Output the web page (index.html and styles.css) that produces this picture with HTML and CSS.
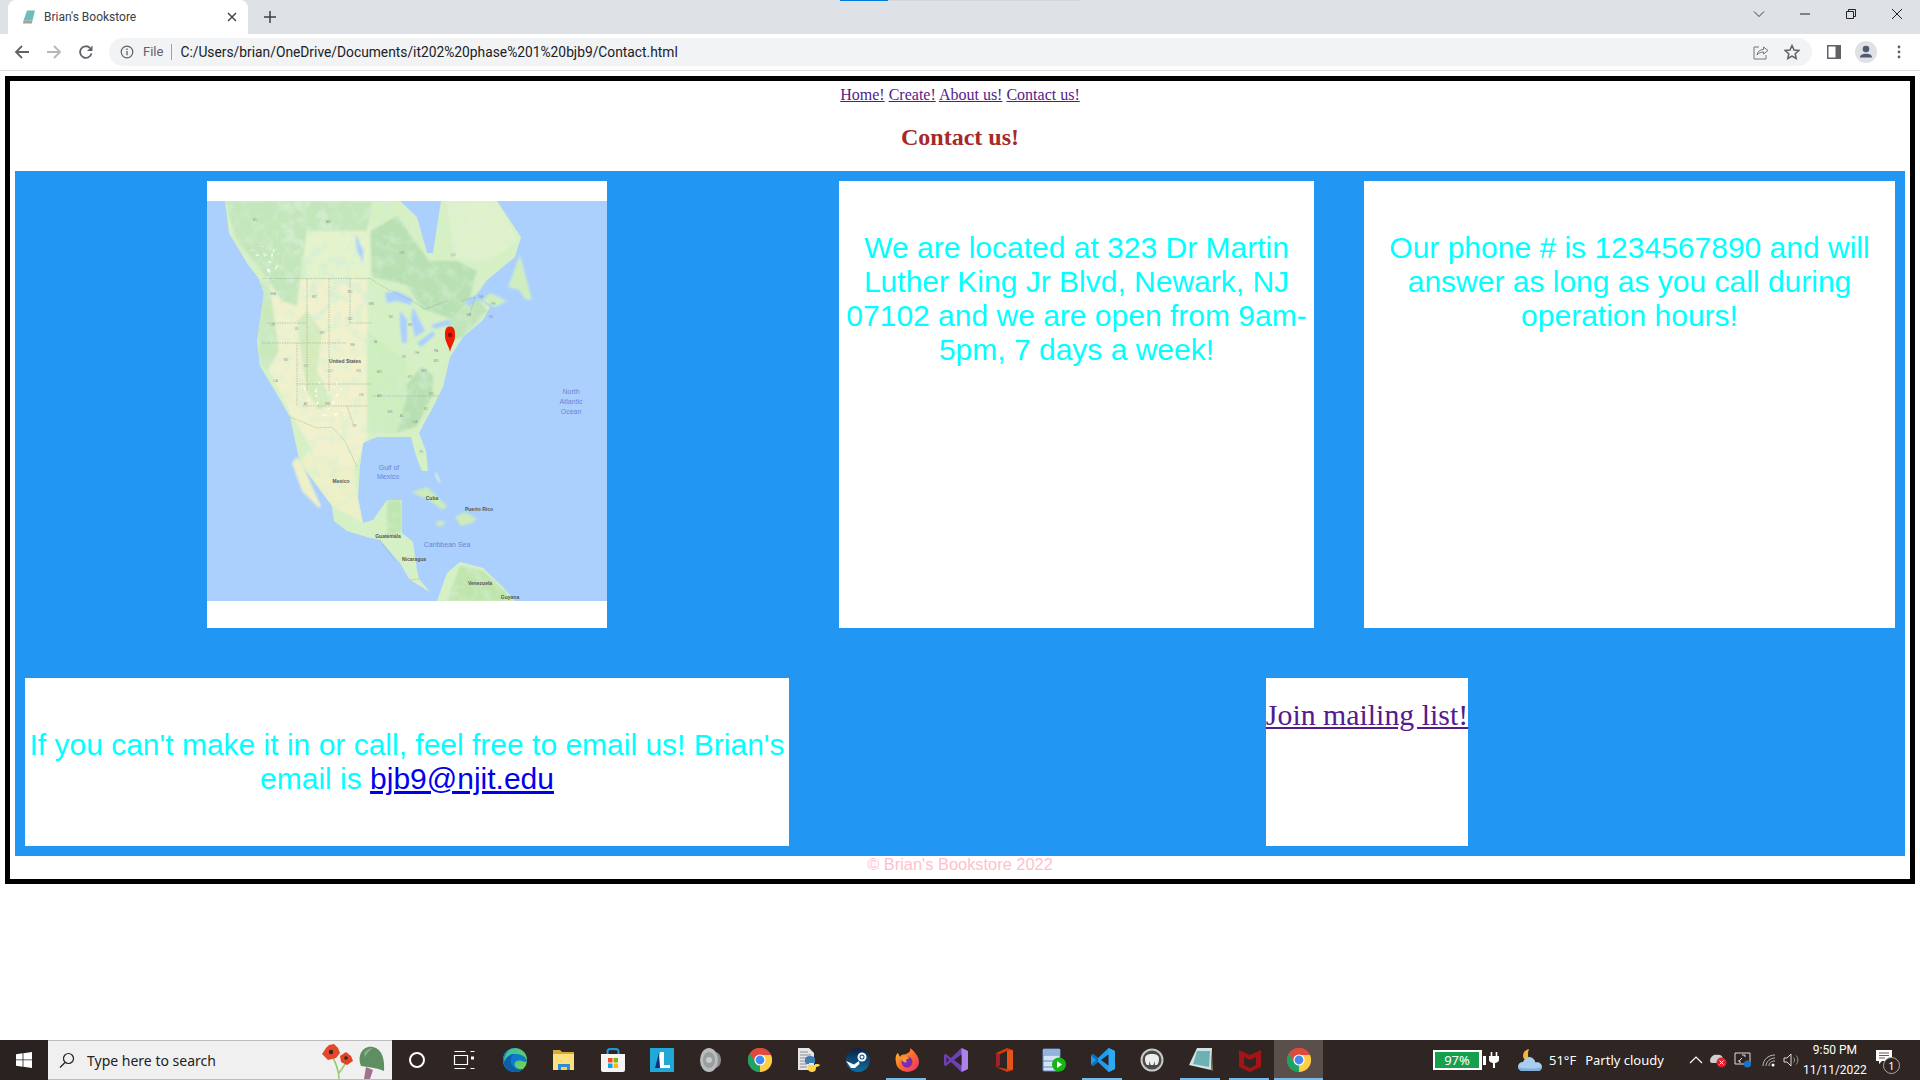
FILE: index.html
```html
<!DOCTYPE html>
<html lang="en">
<head>
<meta charset="utf-8">
<title>Brian's Bookstore</title>
<link rel="stylesheet" href="styles.css">
</head>
<body>
<svg class="defs" width="0" height="0" aria-hidden="true">
  <symbol id="chrome" viewBox="0 0 24 24">
    <circle cx="12" cy="12" r="12" fill="#dd4b3e"/>
    <path d="M1.600 18 7 9l5 3 0 12A12 12 0 0 1 1.600 18Z" fill="#1ea362"/>
    <path d="M2 5.200 7 14 1.600 18A12 12 0 0 1 2 5.200Z" fill="#1ea362"/>
    <path d="M12 24 12 12l-1-5H23A12 12 0 0 1 12 24Z" fill="#ffce43"/>
    <path d="M12 7H23A12 12 0 0 0 2 5.200L7 14A5.500 5.500 0 0 1 12 7Z" fill="#dd4b3e"/>
    <circle cx="12" cy="12" r="5.600" fill="#fff"/>
    <circle cx="12" cy="12" r="4.400" fill="#4688f1"/>
  </symbol>
</svg>
<div class="progress"><span class="progress-done"></span><span class="progress-rest"></span></div>
<header class="tabstrip">
  <div class="tab">
    <svg class="favicon" viewBox="0 0 16 16"><path d="M6 1.500h8L11.500 11.500H2.500Z" fill="#6fbcbc"/><path d="M2.500 11.500h9l-.6 3H2Z" fill="#9aa5a5"/></svg>
    <span class="tab-title">Brian's Bookstore</span>
    <svg class="tab-close" viewBox="0 0 10 10"><path d="M1 1l8 8M9 1l-8 8" stroke="#3c4043" stroke-width="1.400"/></svg>
  </div>
  <svg class="newtab" viewBox="0 0 12 12"><path d="M6 0v12M0 6h12" stroke="#3c4043" stroke-width="1.500"/></svg>
  <div class="winctl">
    <svg class="wc wc-chev" viewBox="0 0 12 8"><path d="M1 1.500l5 5 5-5" fill="none" stroke="#3c4043"/></svg>
    <svg class="wc wc-min" viewBox="0 0 12 12"><path d="M1 6h10" stroke="#222"/></svg>
    <svg class="wc wc-max" viewBox="0 0 12 12"><path d="M1.500 3.500h7v7h-7z M3.500 3.500v-2h7v7h-2" fill="none" stroke="#222"/></svg>
    <svg class="wc wc-close" viewBox="0 0 12 12"><path d="M1 1l10 10M11 1L1 11" stroke="#222"/></svg>
  </div>
</header>
<nav class="toolbar">
  <svg class="tb tb-back" viewBox="0 0 16 16"><path d="M15 8H2M8 2 2 8l6 6" fill="none" stroke="#5f6368" stroke-width="1.800"/></svg>
  <svg class="tb tb-fwd" viewBox="0 0 16 16"><path d="M1 8h13M8 2l6 6-6 6" fill="none" stroke="#b6b9bc" stroke-width="1.800"/></svg>
  <svg class="tb tb-reload" viewBox="0 0 16 16"><path d="M13.500 9.500A5.800 5.800 0 1 1 12 4" fill="none" stroke="#5f6368" stroke-width="1.800"/><path d="M14.500 1.500v5.500H9Z" fill="#5f6368"/></svg>
  <div class="omnibox">
    <svg class="info" viewBox="0 0 14 14"><circle cx="7" cy="7" r="5.800" fill="none" stroke="#5f6368" stroke-width="1.200"/><path d="M7 6v4.200M7 3.600v1.300" stroke="#5f6368" stroke-width="1.300"/></svg>
    <span class="scheme">File</span>
    <span class="omni-sep"></span>
    <span class="url">C:/Users/brian/OneDrive/Documents/it202%20phase%201%20bjb9/Contact.html</span>
    <svg class="omni-share" viewBox="0 0 16 16"><path d="M6 3H1v12h12v-4" fill="none" stroke="#72767a"/><path d="M4 11c.6-3.500 3-5.500 6.500-5.500V3L15 6.500 10.500 10V8C8 8 5.500 9 4 11Z" fill="none" stroke="#72767a"/></svg>
    <svg class="omni-star" viewBox="0 0 16 16"><path d="M8 1.500l2 4.500 4.800.5-3.600 3.200 1 4.800L8 12l-4.200 2.500 1-4.800L1.200 6.500 6 6Z" fill="none" stroke="#5f6368" stroke-width="1.500"/></svg>
  </div>
  <svg class="tb-panel" viewBox="0 0 14 14"><rect width="14" height="14" fill="#5f6368"/><rect x="1.500" y="1.500" width="7" height="11" fill="#fff"/></svg>
  <svg class="avatar" viewBox="0 0 22 22"><circle cx="11" cy="11" r="11" fill="#dfe1e5"/><circle cx="11" cy="8" r="3.300" fill="#4f5b73"/><path d="M5 16.500c0-2.800 3-3.800 6-3.800s6 1 6 3.800Z" fill="#4f5b73"/></svg>
  <svg class="kebab" viewBox="0 0 4 14"><circle cx="2" cy="2" r="1.400" fill="#5f6368"/><circle cx="2" cy="7" r="1.400" fill="#5f6368"/><circle cx="2" cy="12" r="1.400" fill="#5f6368"/></svg>
</nav>

<main class="viewport">
  <div class="frame">
    <div class="site-nav">
      <a href="#">Home!</a> <a href="#">Create!</a> <a href="#">About us!</a> <a href="#">Contact us!</a>
    </div>
    <h1 class="page-title">Contact us!</h1>
    <section class="grid">
      <div class="card card-map">
        <svg class="map" viewBox="0 0 400 400" role="img" aria-label="Map of North America with a pin on Newark">
          <defs>
            <filter id="soft" x="-5%" y="-5%" width="110%" height="110%"><feGaussianBlur stdDeviation="1.200"/></filter>
            <filter id="mottle" x="0" y="0" width="100%" height="100%">
              <feTurbulence type="fractalNoise" baseFrequency="0.09" numOctaves="3" seed="7"/>
              <feColorMatrix type="matrix" values="0 0 0 0 .66  0 0 0 0 .86  0 0 0 0 .66  1.600 0 0 0 -.72"/>
            </filter>
            <filter id="snow" x="0" y="0" width="100%" height="100%">
              <feTurbulence type="fractalNoise" baseFrequency="0.25" numOctaves="2" seed="3"/>
              <feColorMatrix type="matrix" values="0 0 0 0 1  0 0 0 0 1  0 0 0 0 1  5 0 0 0 -3.100"/>
            </filter>
            <clipPath id="landclip"><path d="M18 0 22 32 40 62 52 78 57 92 50 140 53 165 68 190 83 216 93 262 110 285 125 305 127 320 140 330 160 336 173 339 193 362 203 379 223 391 230 400 240 372 253 361 276 367 296 386 308 400 230 400 223 391 212 378 210 369 206 341 195 332 195 299 180 299 166 319 156 322 151 296 153 266 156 242 170 236 204 236 209 255 215 270 221 270 219 250 212 232 226 206 236 186 243 156 256 136 276 119 283 106 268 96 280 79 308 56 314 36 290 0 234 0 226 52 220 52 210 16 193 0Z"/></clipPath>
            <clipPath id="westclip"><path d="M70 0H100L160 40 170 100 150 130 120 130 90 100 60 60Z"/></clipPath>
            <clipPath id="swclip"><path d="M95 180H140V215H100Z M42 45H72V82H56Z"/></clipPath>
          </defs>
          <rect width="400" height="400" fill="#abd0fe"/>
          <g clip-path="url(#landclip)">
            <rect width="400" height="400" fill="#d6f0c4"/>
            <g filter="url(#soft)">
              <path d="M95 25 165 25 163 77 100 77Z" fill="#e5f3cc"/>
              <path d="M60 78H160L162 232 150 262 125 300 112 262 100 240 85 215 62 170Z" fill="#f1f1cd"/>
              <path d="M18 0H165L160 30 100 30 95 60 90 105 75 100 55 70 30 40Z" fill="#c4e6bb"/>
              <path d="M50 80 62 80 72 150 60 170 52 160Z" fill="#c9e9bd"/>
              <path d="M163 30 190 15 222 60 250 60 270 70 262 100 245 118 215 108 200 84 165 76Z" fill="#b8e0b3"/>
              <path d="M240 0 290 0 312 40 280 60 248 58Z" fill="#e0f2cc"/>
              <path d="M245 118 270 95 280 110 258 135 245 140 238 125Z" fill="#c0e4b8"/>
              <path d="M190 195 215 165 226 175 225 195 210 225 190 232 178 222Z" fill="#b8dfb2"/>
              <path d="M160 130 160 232 190 232 200 195 200 160Z" fill="#cdeebd"/>
              <path d="M95 262 100 250 125 260 148 270 150 296 156 322 125 305Z" fill="#eef0c8"/>
              <path d="M180 299 195 299 195 332 180 332Z" fill="#bfe6b0"/>
              <path d="M240 400 253 365 276 370 300 392 308 400Z" fill="#bfe5ac"/>
              <path d="M90 120 100 110 115 130 110 170 125 200 112 210 100 190 95 160Z" fill="#d6ebbc"/>
            </g>
            <rect width="400" height="400" filter="url(#mottle)"/>
            <g clip-path="url(#westclip)"><rect width="400" height="140" y="0" filter="url(#mottle)"/></g>
            <g clip-path="url(#swclip)"><rect width="400" height="400" filter="url(#snow)"/></g>
          </g>
          <g filter="url(#soft)" class="map-islands">
            <path d="M85 262 95 290 112 307 114 305 104 283 96 264 90 256Z" fill="#eef0c8"/>
            <path d="M301 86 313 54 325 99 318 98 312 89Z" fill="#cfeec0"/>
            <path d="M275 100 283 92 290 95 300 100 288 106Z" fill="#cfeec0"/>
            <path d="M205 291 220 286 240 305 236 309 220 298 210 294Z M248 316 258 311 270 318 265 322 254 325Z M229 320 238 320 236 325 230 325Z" fill="#cdebbb"/>
            <path d="M229 271 233 280 232 282 228 273Z" fill="#eef5dc"/>
          </g>
          <g class="map-water" filter="url(#soft)">
            <path d="M178 92 190 90 206 98 204 104 190 100 180 102Z"/>
            <path d="M193 110 200 118 200 142 195 142 193 125Z"/>
            <path d="M206 106 218 130 208 136 204 118Z"/>
            <path d="M210 142 226 130 228 134 214 146Z"/>
            <path d="M224 124 243 118 243 123 228 128Z"/>
            <path d="M148 32 156 50 156 62 150 48Z"/>
            <path d="M258 100 280 88 276 94 262 106Z"/>
          </g>
          <g class="map-borders" fill="none">
            <path d="M56 77.500H163L180 88 205 100 218 108 240 100"/>
            <path d="M55 142H140M60 122 100 122M100 78V190M122 78V190M90 142 90 205M90 183H165M96 205H160M140 205 147 225M143 122V78M143 122 165 122"/>
            <path d="M83 216 110 227 125 226 138 240 150 266 M165 195H232"/>
            <path d="M254 100 268 96 262 116"/>
            <path d="M180 333 192 333 M173 339 188 360 M203 379 212 378"/>
          </g>
          <g transform="translate(-7 -21) scale(.33333)" class="states">
            <text x="343" y="355">MT</text><text x="450" y="340">ND</text><text x="450" y="420">SD</text><text x="367" y="461">WY</text><text x="458" y="499">NE</text><text x="390" y="577">CO</text><text x="476" y="577">KS</text><text x="484" y="648">OK</text><text x="463" y="740">TX</text><text x="318" y="675">AZ</text><text x="383" y="675">NM</text><text x="318" y="562">UT</text><text x="258" y="544">NV</text><text x="226" y="607">CA</text><text x="218" y="438">OR</text><text x="290" y="450">ID</text><text x="219" y="345">WA</text><text x="514" y="375">MN</text><text x="526" y="488">IA</text><text x="538" y="580">MO</text><text x="538" y="650">AR</text><text x="570" y="700">MS</text><text x="605" y="712">AL</text><text x="645" y="728">GA</text><text x="665" y="820">FL</text><text x="630" y="595">KY</text><text x="650" y="522">OH</text><text x="612" y="535">IN</text><text x="572" y="413">WI</text><text x="630" y="438">MI</text><text x="708" y="516">PA</text><text x="708" y="547">MD</text><text x="672" y="577">WV</text><text x="695" y="645">NC</text><text x="678" y="690">SC</text>
            <text x="605" y="222">ON</text><text x="760" y="228">QC</text><text x="385" y="130">AB</text><text x="165" y="122">BC</text><text x="843" y="355">NB</text><text x="880" y="375">PE</text><text x="873" y="415">NS</text><text x="807" y="408">ME</text>
          </g>
          <text class="map-label map-dark" x="138" y="162">United States</text>
          <text class="map-label map-dark" x="134" y="282">Mexico</text>
          <text class="map-label map-sea" x="364" y="193">North</text>
          <text class="map-label map-sea" x="364" y="203">Atlantic</text>
          <text class="map-label map-sea" x="364" y="213">Ocean</text>
          <text class="map-label map-sea" x="182" y="269">Gulf of</text>
          <text class="map-label map-sea" x="181" y="278">Mexico</text>
          <text class="map-label map-sea" x="240" y="346">Caribbean Sea</text>
          <text class="map-label map-dark" x="225" y="299">Cuba</text>
          <text class="map-label map-dark" x="272" y="310">Puerto Rico</text>
          <text class="map-label map-dark" x="181" y="337">Guatemala</text>
          <text class="map-label map-dark" x="207" y="360">Nicaragua</text>
          <text class="map-label map-dark" x="273" y="384">Venezuela</text>
          <text class="map-label map-dark" x="303" y="398">Guyana</text>
          <path d="M243 125.500C237.500 125.500 238 132 238 135 238 141 242 145 243 151 244 145 248 141 248 135 248 132 248.500 125.500 243 125.500Z" fill="#f01a00"/>
          <circle cx="243" cy="134" r="2.300" fill="#8f1208"/>
        </svg>
      </div>
      <div class="card"><p class="card-text">We are located at 323 Dr Martin Luther King Jr Blvd, Newark, NJ 07102 and we are open from 9am-5pm, 7 days a week!</p></div>
      <div class="card"><p class="card-text">Our phone # is 1234567890 and will answer as long as you call during operation hours!</p></div>
      <div class="card card-email"><p class="card-text">If you can't make it in or call, feel free to email us! Brian's email is <a class="mail" href="#">bjb9@njit.edu</a></p></div>
      <div class="card card-join"><a class="join" href="#">Join mailing list!</a></div>
    </section>
    <footer class="site-foot">© Brian's Bookstore 2022</footer>
  </div>
</main>

<footer class="taskbar">
  <div class="start"><svg viewBox="0 0 16 16" class="winlogo"><path d="M0 2.200 6.600 1.300V7.500H0ZM7.400 1.200 16 0V7.500H7.400ZM0 8.300H6.600V14.700L0 13.800ZM7.400 8.300H16V16L7.400 14.800Z" fill="#fff"/></svg></div>
  <div class="search">
    <svg class="search-glass" viewBox="0 0 16 16"><circle cx="9.500" cy="6.500" r="5" fill="none" stroke="#222" stroke-width="1.200"/><path d="M6 10.500 1 15.500" stroke="#222" stroke-width="1.300"/></svg>
    <span class="search-text">Type here to search</span>
    <svg class="search-art" viewBox="0 0 66 38">
      <path d="M19 38C19 30 17 24 12 15M19 32C22 28 25 24 27 19" fill="none" stroke="#9cc76f" stroke-width="1.600"/>
      <path d="M2 13 6 7 9 4 14 3 18 7 20 12 16 17 8 19Z" fill="#e2492a"/><path d="M20 15 26 11 31 15 33 20 27 24 21 21Z" fill="#dd4526"/>
      <circle cx="11" cy="11" r="2.200" fill="#3a2320"/><circle cx="26" cy="17" r="1.800" fill="#3a2320"/>
      <path d="M41 25C36 11 46 4 53 6 62 8 65 18 64 30 57 27 48 26 41 25Z" fill="#5e8f62"/>
      <path d="M44 12C47 8 50 7 53 7 50 9 47 12 45 16Z" fill="#86b083"/>
      <path d="M46 26 53 29 50 38H44Z" fill="#a5708e"/>
    </svg>
  </div>
  <div class="taskicons">
    <div class="ti"><svg class="ico" viewBox="0 0 24 24"><circle cx="12" cy="12" r="7" fill="none" stroke="#fff" stroke-width="2"/></svg></div>
    <div class="ti ti-task"><svg class="ico" viewBox="0 0 24 24"><path d="M1.500 3.500h11M1.500 20.500h11M1.500 7.500h13v9h-13z M17.500 3.500h4M17.500 20.500h4" fill="none" stroke="#fff" stroke-width="1.200"/><rect x="18" y="8.500" width="3" height="3" fill="#fff"/></svg></div>
    <div class="ti"><svg class="ico" viewBox="0 0 24 24"><defs><linearGradient id="edge1" x1="0" y1="0" x2="1" y2="1"><stop offset="0" stop-color="#2cc0b0"/><stop offset="1" stop-color="#7ad44e"/></linearGradient></defs><circle cx="12" cy="12" r="12" fill="url(#edge1)"/><path d="M12 0C5 0 0 5 0 12 0 19 5 24 12 24 15 24 18 23 20.500 21 16 22 12 20 11.500 16.500 11 14 14 12 17 12.500 20 13 22.500 15 24 13 23 8.500 18 6 12 6 7 6 3 9 1 14 1 6 6 0 12 0Z" fill="#1079c9"/><path d="M1 14C3 9 7 6 12 6 8 7 7 11 8 15 9.500 20 15 22.500 20.500 21 15 26 1 25 1 14Z" fill="#0c5ea8"/></svg></div>
    <div class="ti"><svg class="ico" viewBox="0 0 24 24"><path d="M1 2h7l2 2H22v18H1Z" fill="#d9a83b"/><rect x="1" y="6" width="21" height="16" fill="#ffdf7e"/><rect x="6" y="16" width="12" height="6" fill="#2c8dd9"/><rect x="9" y="19" width="6" height="3" fill="#f6cf6a"/></svg></div>
    <div class="ti"><svg class="ico" viewBox="0 0 24 24"><path d="M6.500 6V3.500C6.500 1 8 1 12 1s5.500 0 5.500 2.500V6" fill="none" stroke="#1b9fe0" stroke-width="2"/><path d="M0 6H24V22a2 2 0 0 1-2 2H2a2 2 0 0 1-2-2Z" fill="#f4f4f4"/><rect x="7" y="10" width="4.500" height="4.500" fill="#f25022"/><rect x="12.500" y="10" width="4.500" height="4.500" fill="#7fba00"/><rect x="7" y="15.500" width="4.500" height="4.500" fill="#00a4ef"/><rect x="12.500" y="15.500" width="4.500" height="4.500" fill="#ffb900"/></svg></div>
    <div class="ti"><svg class="ico" viewBox="0 0 24 24"><rect width="24" height="24" fill="#1fa8d8"/><path d="M10 4h4v13h6v3H6Z" fill="#fff"/><path d="M9 5 5 20h5Z" fill="#0f2f7a"/></svg></div>
    <div class="ti"><svg class="ico" viewBox="0 0 24 24"><ellipse cx="16" cy="12" rx="6" ry="8" fill="#8b8d90"/><ellipse cx="10" cy="12" rx="9" ry="12" fill="#b9bcbf"/><ellipse cx="10" cy="12" rx="6" ry="8" fill="#9b9ea1"/><circle cx="10" cy="12" r="3" fill="#c9cbcd"/></svg></div>
    <div class="ti"><svg class="ico"><use href="#chrome"/></svg></div>
    <div class="ti"><svg class="ico" viewBox="0 0 24 24"><path d="M1 0H12L17 5V22H1Z" fill="#e4e6e8"/><path d="M3 4h8M3 7h11M3 10h8M3 13h7M3 16h7M3 19h7" stroke="#8a8d90"/><path d="M8 12c0-3 2-4 5-4s5 1 5 3v4h-6v1h-2c-2 0-2-2-2-4Z" fill="#3f7cb2"/><path d="M23 15c0 3-2 4-4 4v1c0 3-2 4-4 4s-4-1-4-3v-4h7v-1h3c1 0 2 1 2 3Z" fill="#ffd64f"/></svg></div>
    <div class="ti"><svg class="ico" viewBox="0 0 24 24"><defs><linearGradient id="st" x1="0" y1="0" x2="0" y2="1"><stop offset="0" stop-color="#0d2147"/><stop offset="1" stop-color="#0f6f9f"/></linearGradient></defs><circle cx="12" cy="12" r="12" fill="url(#st)"/><path d="M0 13l8 3.500 5-3.500 .5 3-4.500 4L5 20Z" fill="#fff"/><circle cx="16" cy="9" r="4.500" fill="#fff"/><circle cx="16" cy="9" r="2.500" fill="#1a4a7c"/><circle cx="16" cy="9" r="1.500" fill="#fff"/></svg></div>
    <div class="ti ti-on"><svg class="ico" viewBox="0 0 24 24"><defs><linearGradient id="fx" x1="0" y1="0" x2="1" y2="1"><stop offset="0" stop-color="#ffc42c"/><stop offset=".5" stop-color="#ff6a2b"/><stop offset="1" stop-color="#ee2a7a"/></linearGradient></defs><path d="M15 0C19 3 24 8 24 14A11.500 10 0 0 1 1 14C0 10 1 6 3 5L5 9C6 6 9 7 11 6 14 5 16 3 15 0Z" fill="url(#fx)"/><circle cx="12" cy="14" r="5.500" fill="#7a2bb8"/><path d="M7 11C9 7 14 8 14 11 12 10 10 12 12 14 10 15 7 14 7 11Z" fill="#ff9c2e"/></svg></div>
    <div class="ti"><svg class="ico" viewBox="0 0 24 24"><path d="M17.500 0 24 3V21L17.500 24 7 14 2 18 0 17V7L2 6 7 10Z" fill="#6f3fb8"/><path d="M17.500 0 24 3V21L17.500 24Z" fill="#ac82e8"/><path d="M17.500 6.500V17.500L10 12Z M2.500 9V15L5 12Z" fill="#2d2320"/></svg></div>
    <div class="ti"><svg class="ico" viewBox="0 0 24 24"><path d="M3 5 14 0 20 2V22L14 24 3 19 14 21V3L7 6V17L3 19Z" fill="#d73b02"/><path d="M3 5 7 6V17L3 19Z" fill="#a51e2b"/><path d="M14 3 20 2V22L14 21Z" fill="#e8531c"/></svg></div>
    <div class="ti"><svg class="ico" viewBox="0 0 24 24"><rect x="1" y="1" width="17" height="22" rx="1" fill="#d5e2f1" stroke="#5f8cc4"/><path d="M1 7h17M1 13h17M1 19h17M9 1v6" stroke="#5f8cc4" fill="none"/><rect x="1" y="1" width="17" height="6" fill="#93b3dc"/><circle cx="17" cy="16.500" r="7" fill="#12b712"/><path d="M15 13v7l5-3.500Z" fill="#fff"/></svg></div>
    <div class="ti ti-on"><svg class="ico" viewBox="0 0 24 24"><path d="M17.500 0 24 3V21L17.500 24 7 14 2 18 0 16.500V7.500L2 6 7 10Z" fill="#1f9cf0"/><path d="M17.500 0 24 3V21L17.500 24Z" fill="#2cabf2"/><path d="M7 10 2 6 0 7.500 5 12 0 16.500 2 18 7 14Z" fill="#0b6fb8"/><path d="M17.500 6.500V17.500L10 12Z" fill="#2d2320"/></svg></div>
    <div class="ti"><svg class="ico" viewBox="0 0 24 24"><circle cx="12" cy="12" r="10.500" fill="#4a4a4a" stroke="#c8c8c8" stroke-width="2"/><path d="M5 11c0-4 3-5 7-5s7 1 7 5c0 3-1 5-2 6h-2l-.5-4-1 4h-3l-1-4-.5 4H7c-1-1-2-3-2-6Z" fill="#eee"/></svg></div>
    <div class="ti ti-on"><svg class="ico" viewBox="0 0 24 24"><path d="M8 0H23L22 22 0 17Z" fill="#cfe3e6"/><path d="M8 3 21 3 20 19 4 16Z" fill="#6fb0b4"/><path d="M23 6 24 23 22 22Z" fill="#8a7a56"/></svg></div>
    <div class="ti ti-on"><svg class="ico" viewBox="0 0 24 24"><path d="M1 2 12 7 23 2V19L12 24 1 19ZM6 9V17L12 20 18 17V9L12 12Z" fill="#a51414"/></svg></div>
    <div class="ti ti-on ti-active"><svg class="ico"><use href="#chrome"/></svg></div>
  </div>
  <div class="tray">
    <div class="battery"><span class="battery-fill">97%</span></div>
    <span class="battery-nub"></span>
    <svg class="plug" viewBox="0 0 10 16"><path d="M2.500 0v4M7.500 0v4" stroke="#fff" stroke-width="1.600"/><path d="M0 4h10v4C10 10 7 11 6 11v5H4v-5C3 11 0 10 0 8Z" fill="#fff"/></svg>
    <svg class="weather" viewBox="0 0 24 24"><path d="M11 1C6.500 2 4 6 5.500 10 7 13 10 14 13 13 10 11 9 6 11 1Z" fill="#f3b53b"/><path d="M5 23c-3 0-5-2-5-4.500S2 14 5 14c1-3 4-5 7-5 3 .5 5 3 5.500 5.500 3-1 6.500 1 6.500 4.500 0 2-2 4-4 4Z" fill="#a9cdec"/><path d="M5 23c-3 0-5-2-5-4 4 2 18 2 24 0 0 2-2 4-4 4Z" fill="#7fb0dc"/></svg>
    <span class="temp">51°F</span>
    <span class="cond">Partly cloudy</span>
    <svg class="t-chev" viewBox="0 0 14 8"><path d="M1 7l6-6 6 6" fill="none" stroke="#fff" stroke-width="1.200"/></svg>
    <svg class="t-cloud" viewBox="0 0 18 16"><path d="M1 9c0-4 4-7 7-6 3-1 6 1 6 4v4H3C2 11 1 10 1 9Z" fill="#cfcfcf"/><circle cx="12.500" cy="10.500" r="5" fill="#e0202c"/><path d="M10.500 8.500l4 4M14.500 8.500l-4 4" stroke="#fff"/></svg>
    <svg class="t-screen" viewBox="0 0 18 16"><path d="M1 1h15v11H1z" fill="none" stroke="#ddd"/><path d="M5 9l3-3M8 3h3v2M7 10H5V8" fill="none" stroke="#ddd"/><circle cx="13.500" cy="12" r="3.600" fill="#1d72c9"/></svg>
    <svg class="t-wifi" viewBox="0 0 14 14"><path d="M1 13C1 7 6 2 13 2M4 13c0-4 4-8 9-8M7 13c0-3 2-5 6-5" fill="none" stroke="#bbb"/><circle cx="11" cy="12" r="1.500" fill="#fff"/></svg>
    <svg class="t-vol" viewBox="0 0 16 14"><path d="M1 5h3l4-4v12L4 9H1Z" fill="none" stroke="#ddd"/><path d="M10.500 4.500c1.500 1.500 1.500 3.500 0 5M13 2.500c2.500 2.500 2.500 6.500 0 9" fill="none" stroke="#999"/></svg>
    <div class="clock"><span>9:50 PM</span><span>11/11/2022</span></div>
    <div class="notif">
      <svg class="notif-ico" viewBox="0 0 16 15"><path d="M0 0h16v11H6L3 14v-3H0Z" fill="#fff"/><path d="M3 3h10M3 5.500h10M3 8h6" stroke="#333" stroke-width=".8"/></svg>
      <span class="notif-badge">1</span>
    </div>
  </div>
</footer>
</body>
</html>
```
FILE: styles.css
```css
* { box-sizing: border-box; }
html, body { margin: 0; height: 100%; }
body { display: flex; flex-direction: column; height: 1080px; width: 1920px; overflow: hidden; background: #fff; font-family: "Liberation Serif", serif; position: relative; }
.defs { position: absolute; }

.progress { position: absolute; left: 840px; top: 0; display: flex; height: 1px; z-index: 2; }
.progress-done { width: 48px; background: #0078d7; }
.progress-rest { width: 193px; background: #d3d5d8; }

.tabstrip { height: 34px; flex: none; background: #dee1e6; display: flex; align-items: flex-end; padding-left: 8px; }
.tab { width: 240px; height: 34px; background: #fff; border-radius: 8px 8px 0 0; display: flex; align-items: center; padding: 0 11px 0 13px; font: 12px Roboto, sans-serif; color: #3c4043; }
.favicon { width: 16px; height: 16px; flex: none; }
.tab-title { margin-left: 7px; flex: 1; white-space: nowrap; }
.tab-close { width: 10px; height: 10px; flex: none; }
.newtab { width: 12px; height: 12px; margin: 0 0 11px 16px; flex: none; }
.winctl { margin-left: auto; height: 34px; display: flex; align-items: center; padding-right: 17px; padding-bottom: 6px; }
.wc { flex: none; display: block; }
.wc-chev { width: 12px; height: 8px; margin-right: 34px; }
.wc-min { width: 12px; height: 12px; margin-right: 34px; }
.wc-max { width: 12px; height: 12px; margin-right: 34px; }
.wc-close { width: 12px; height: 12px; }

.toolbar { height: 37px; flex: none; background: #fff; border-bottom: 1px solid #dadce0; display: flex; align-items: center; padding: 0 0 1px 14px; }
.tb { width: 16px; height: 16px; flex: none; }
.tb-fwd { margin-left: 16px; }
.tb-reload { margin-left: 16px; }
.omnibox { margin-left: 15px; width: 1703px; height: 28px; border-radius: 14px; background: #f1f3f4; display: flex; align-items: center; padding: 0 12px 0 11px; font: 13.8px Roboto, sans-serif; }
.info { width: 14px; height: 14px; flex: none; }
.scheme { margin-left: 9px; color: #5f6368; font-size: 13px; }
.omni-sep { width: 1px; height: 16px; background: #9aa0a6; margin: 0 8px 0 8px; }
.url { color: #202124; flex: 1; white-space: nowrap; }
.omni-share { width: 16px; height: 16px; flex: none; margin-right: 15px; }
.omni-star { width: 16px; height: 16px; flex: none; }
.tb-panel { width: 14px; height: 14px; margin-left: 15px; flex: none; }
.avatar { width: 22px; height: 22px; margin-left: 14px; flex: none; }
.kebab { width: 4px; height: 14px; margin-left: 20px; flex: none; }

.viewport { flex: 1; padding: 5px 5px 0; min-height: 0; }
.frame { border: 5px solid #000; padding: 5px 5px 0; height: 808px; }
.site-nav { text-align: center; font-size: 16px; line-height: 18px; }
.site-nav a { color: #551a8b; }
.page-title { margin: 20px 0; font-size: 24px; line-height: 27px; text-align: center; color: #a52a2a; font-weight: bold; }
.grid { background: #2196f3; padding: 10px; display: grid; grid-template-columns: 764px 475px 1fr; grid-template-rows: 447px 168px; gap: 50px; }
.card { background: #fff; padding: 20px 0; text-align: center; }
.card-map { justify-self: center; width: 400px; }
.map { width: 400px; height: 400px; display: block; }
.card-text { margin: 30px 0; font: 30px/34px "Liberation Sans", sans-serif; color: #0ff; }
.card-email { padding-left: 3px; padding-right: 3px; }
.mail { color: #00e; }
.card-join { grid-column: 2 / 4; justify-self: center; }
.join { font: 29.85px/34px "Liberation Serif", serif; color: #551a8b; }
.site-foot { text-align: center; font: 16.4px/16px "Liberation Sans", sans-serif; color: #ffc0cb; }

.map-water path { fill: #abd0fe; }
.map-borders path { stroke: #8f9c88; stroke-width: .5; stroke-dasharray: 1.500 1; }
.states text { font: 10px "Liberation Sans", sans-serif; fill: #8b9a8b; text-anchor: middle; }
.map-label { font: bold 5px "Liberation Sans", sans-serif; text-anchor: middle; }
.map-dark { fill: #555; }
.map-sea { fill: #6c84d6; font-weight: normal; font-size: 7px; }

.taskbar { height: 40px; flex: none; background: #2f2522; display: flex; color: #fff; font: 12px "Noto Sans", sans-serif; }
.start { width: 48px; flex: none; background: #2a2220; display: flex; align-items: center; justify-content: center; }
.winlogo { width: 16px; height: 16px; }
.search { width: 344px; flex: none; background: #f0f0f0; border: 1px solid #bdbdbd; border-width: 1px 0; display: flex; align-items: center; padding-left: 11px; color: #222; }
.search-glass { width: 16px; height: 16px; flex: none; }
.search-text { margin-left: 12px; font-size: 14px; white-space: nowrap; }
.search-art { width: 66px; height: 38px; margin-left: auto; margin-right: 6px; }
.taskicons { display: flex; flex: none; }
.ti { width: 49px; height: 40px; display: flex; align-items: center; justify-content: center; position: relative; padding-bottom: 1px; }
.ti-task { padding-right: 2px; }
.ti-on::after { content: ""; position: absolute; left: 4px; right: 5px; bottom: 0; height: 2px; background: #76b9ed; }
.ti-active { background: #5a4f4a; }
.ti-active::after { left: 0; right: 0; }
.ico { width: 24px; height: 24px; display: block; }
.tray { flex: 1; display: flex; align-items: center; padding-left: 110px; font-size: 13px; }
.battery { width: 49px; height: 20px; border: 2px solid #fff; background: #fff; flex: none; }
.battery-fill { display: block; height: 16px; background: #16a04e; text-align: center; line-height: 16px; font-size: 13px; color: #fff; margin-right: 1px; }
.battery-nub { width: 3px; height: 9px; background: #fff; flex: none; margin-left: 1px; }
.plug { width: 10px; height: 16px; flex: none; margin-left: 3px; }
.weather { width: 24px; height: 24px; flex: none; margin-left: 19px; }
.temp { margin-left: 7px; white-space: nowrap; }
.cond { margin-left: 9px; white-space: nowrap; }
.t-chev { width: 14px; height: 8px; margin-left: 25px; flex: none; }
.t-cloud { width: 18px; height: 16px; margin-left: 6px; flex: none; }
.t-screen { width: 18px; height: 16px; margin-left: 7px; flex: none; }
.t-wifi { width: 14px; height: 14px; margin-left: 10px; flex: none; }
.t-vol { width: 16px; height: 14px; margin-left: 7px; flex: none; }
.clock { margin-left: 5px; width: 62px; display: flex; flex-direction: column; align-items: center; font: 12px/20px Roboto, sans-serif; white-space: nowrap; }
.notif { margin-left: 9px; width: 28px; height: 30px; position: relative; flex: none; }
.notif-ico { width: 16px; height: 15px; position: absolute; left: 1px; top: 5px; }
.notif-badge { position: absolute; left: 8px; top: 12px; width: 17px; height: 17px; border-radius: 50%; background: #2f2522; border: 1px solid #aaa; font-size: 11px; line-height: 15px; text-align: center; }
```
